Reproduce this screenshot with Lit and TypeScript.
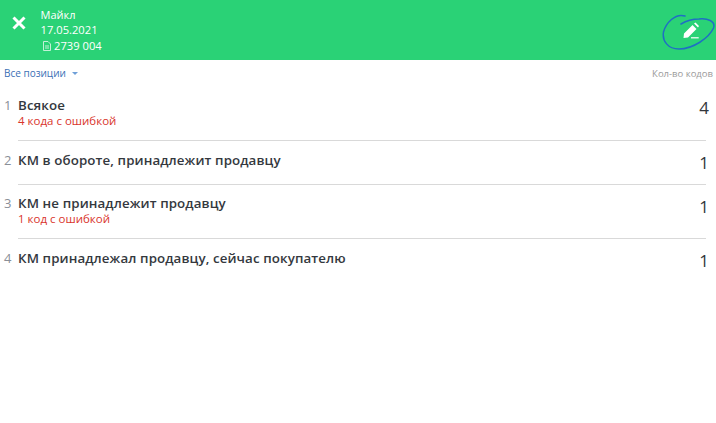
import { LitElement, html, css, nothing } from "lit";
import { customElement } from "lit/decorators.js";

const rows = [
  { n: 1, title: "Всякое", err: "4 кода с ошибкой", count: 4, cls: "a" },
  { n: 2, title: "КМ в обороте, принадлежит продавцу", err: "", count: 1, cls: "b" },
  { n: 3, title: "КМ не принадлежит продавцу", err: "1 код с ошибкой", count: 1, cls: "c" },
  { n: 4, title: "КМ принадлежал продавцу, сейчас покупателю", err: "", count: 1, cls: "d" },
];

@customElement("app-root")
export class AppRoot extends LitElement {
  static styles = css`
    :host { display: block; width: 716px; height: 423px; background: #fff; font-family: "Open Sans", sans-serif; overflow: hidden; }
    .head { height: 60px; background: #2ad276; display: flex; align-items: center; color: #fff; position: relative; }
    .close { width: 38px; display: flex; justify-content: center; margin-top: -15px; flex: none; }
    .info { margin-left: 2.500px; font-size: 11.200px; line-height: 16px; display: flex; flex-direction: column; }
    .name { font-weight: 500; font-size: 11px; margin-top: 1px; margin-bottom: -1px; }
    .num { display: flex; align-items: center; gap: 3px; margin-left: 2.500px; }
    .edit { position: absolute; left: 660px; top: 10px; }
    .bar { height: 26px; display: flex; justify-content: space-between; align-items: center; padding: 0 3px 0 4px; }
    .all { font-size: 10px; color: #3a6fb5; display: flex; align-items: center; gap: 6px; }
    .caret { width: 0; height: 0; border-left: 3.5px solid transparent; border-right: 3.5px solid transparent; border-top: 3.5px solid #6f9fd8; margin-top: 1px; }
    .cnt { font-size: 9.5px; color: #9a9a9a; }
    .row { display: flex; position: relative; padding-left: 4px; }
    .row.a { height: 55px; }
    .row.b { height: 44px; }
    .row.c { height: 54px; }
    .row.d { height: 44px; }
    .idx { width: 14px; flex: none; font-size: 13px; line-height: 18px; color: #8a8f98; padding-top: 10px; }
    .body { flex: 1; box-sizing: border-box; margin-right: 10px; border-bottom: 1px solid #d9d9d9; padding-top: 10px; }
    .row.c .idx, .row.c .body { padding-top: 9px; }
    .row.d .body { border-bottom: none; }
    .title { font-size: 13.330px; font-weight: 550; line-height: 18px; color: #34383e; letter-spacing: 0.1px; }
    .err { font-size: 11.500px; line-height: 14px; color: #d9342c; }
    .count { position: absolute; right: 7px; top: 10px; font-size: 17px; line-height: 24px; color: #33363b; }
  `;

  render() {
    return html`
      <div class="head">
        <div class="close">
          <svg width="14" height="14" viewBox="0 0 14 14"><path d="M1.500 1.500 12.500 12.500M12.500 1.500 1.500 12.500" stroke="#fff" stroke-width="3" fill="none"/></svg>
        </div>
        <div class="info">
          <span class="name">Майкл</span>
          <span>17.05.2021</span>
          <span class="num">
            <svg width="8" height="10" viewBox="0 0 8 10"><path d="M.5 .5H5L7.500 3V9.500H.5Z M2 5H6M2 7H6" fill="none" stroke="#c4f0d8" stroke-width="1"/></svg>
            2739 004
          </span>
        </div>
        <svg class="edit" width="56" height="42" viewBox="0 0 56 42">
          <path d="M25 6C15 3 6 13 3.500 22C2 31 8 39 19 39C33 39 49 28 53.500 18C56 11 47 8 39 9C32 9 26 11 21 14" fill="none" stroke="#1f6fc4" stroke-width="1.500" stroke-linecap="round"/>
          <path d="M23.500 28L24 23.500L32.500 15L36.500 19L28 27.500ZM34 13.500L35.500 12.500L39 16L38 17.500Z" fill="#fff"/>
          <path d="M31 27.800H38.700" stroke="#fff" stroke-width="1.200"/>
        </svg>
      </div>
      <div class="bar">
        <span class="all">Все позиции <i class="caret"></i></span>
        <span class="cnt">Кол-во кодов</span>
      </div>
      ${rows.map(r => html`
        <div class="row ${r.cls}">
          <div class="idx">${r.n}</div>
          <div class="body">
            <div class="title">${r.title}</div>
            ${r.err ? html`<div class="err">${r.err}</div>` : nothing}
          </div>
          <div class="count">${r.count}</div>
        </div>
      `)}
    `;
  }
}
